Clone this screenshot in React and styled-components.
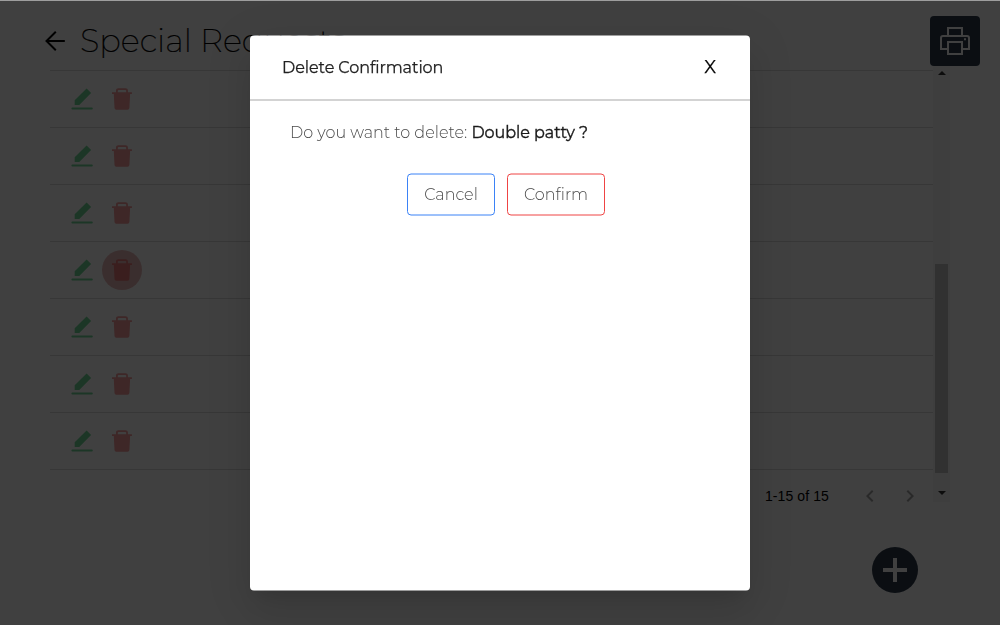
import React from "react";
import styled, { createGlobalStyle } from "styled-components";

const Global = createGlobalStyle`
  * { box-sizing: border-box; }
  body { margin: 0; background: #fff; overflow: hidden; }
`;

const Page = styled.div`
  position: relative;
  width: 1000px;
  height: 625px;
  overflow: hidden;
  background: #fff;
  font-family: Montserrat, Inter, sans-serif;
`;

const Header = styled.header`
  display: flex;
  align-items: flex-start;
  justify-content: space-between;
  height: 66px;
  padding: 16px 20px 0 43px;
`;

const TitleGroup = styled.div`
  display: flex;
  align-items: center;
  gap: 13px;
  height: 50px;
`;

const Title = styled.h1`
  margin: 0;
  font-size: 32px;
  font-weight: 200;
  line-height: 50px;
  white-space: nowrap;
  color: #000;
  -webkit-text-stroke: 0.2px #000;
`;

const PrintButton = styled.button`
  display: flex;
  align-items: center;
  justify-content: center;
  width: 50px;
  height: 50px;
  padding: 0;
  border: 0;
  border-radius: 4px;
  background: #2c3a4a;
`;

const TableArea = styled.main`
  display: flex;
  width: 900px;
  height: 436px;
  margin-left: 50px;
`;

const Table = styled.div`
  flex: 1;
  padding-top: 4px;
`;

const Row = styled.div`
  display: flex;
  align-items: center;
  height: 57px;
  padding-left: 12px;
  border-top: 1px solid #dadada;
`;

const IconButton = styled.button`
  display: flex;
  align-items: center;
  justify-content: center;
  width: 40px;
  height: 40px;
  padding: 0;
  border: 0;
  border-radius: 50%;
  color: ${(p) => p.$color};
  background: ${(p) => p.$fill || "transparent"};
`;

const Pagination = styled.div`
  display: flex;
  align-items: center;
  justify-content: flex-end;
  height: 53px;
  padding-right: 3px;
  border-top: 1px solid #dadada;
  color: #000;
  font: 14px "Liberation Sans", Arial, sans-serif;
`;

const PageCount = styled.span`
  margin-right: 21px;
  letter-spacing: 0.1px;
`;

const PageButton = styled.button`
  display: flex;
  align-items: center;
  justify-content: center;
  width: 40px;
  height: 40px;
  padding: 0;
  border: 0;
  background: transparent;
  color: #a2a2a2;
`;

const Scrollbar = styled.div`
  display: flex;
  flex-direction: column;
  align-items: flex-start;
  width: 17px;
  padding-left: 2px;
  background: #f5f5f5;
`;

const Arrow = styled.div`
  width: 0;
  height: 0;
  margin: ${(p) => (p.$up ? "5px 0 189px 2.5px" : "18px 0 0 2.5px")};
  border: 4px solid transparent;
  border-top: ${(p) => (p.$up ? "0" : "4px solid #303030")};
  border-bottom: ${(p) => (p.$up ? "4px solid #303030" : "0")};
`;

const Thumb = styled.div`
  width: 13px;
  height: 209px;
  background: #c1c1c1;
`;

const AddButton = styled.button`
  display: flex;
  align-items: center;
  justify-content: center;
  width: 46px;
  height: 46px;
  margin: 45px 0 0 872px;
  padding: 0;
  border: 0;
  border-radius: 50%;
  background: #2c3a4a;
`;

const Backdrop = styled.div`
  position: absolute;
  inset: 0;
  display: flex;
  justify-content: center;
  align-items: flex-start;
  padding-top: 35px;
  border-top: 1px solid #9e9e9e;
  background: rgba(0, 0, 0, 0.75);
  background-clip: padding-box;
`;

const Dialog = styled.section`
  width: 500px;
  height: 555px;
  border-radius: 4px;
  background: #fff;
  transform: translateY(-0.5px);
  will-change: transform;
  box-shadow: 0 11px 15px -7px rgba(0, 0, 0, 0.1), 0 24px 38px 3px rgba(0, 0, 0, 0.07),
    0 9px 46px 8px rgba(0, 0, 0, 0.06);
`;

const DialogHeader = styled.div`
  display: flex;
  align-items: center;
  justify-content: space-between;
  height: 65px;
  padding: 0 34px 0 32px;
  border-bottom: 1px solid #a8a8a8;
`;

const DialogTitle = styled.h2`
  margin: 0;
  padding-bottom: 2px;
  font-size: 16px;
  font-weight: 400;
  letter-spacing: -0.08px;
  -webkit-text-stroke: 0.25px #222;
  color: #222;
`;

const Close = styled.button`
  padding: 0 0 2px;
  border: 0;
  background: transparent;
  color: #000;
  font: 400 18px Montserrat, Inter, sans-serif;
  -webkit-text-stroke: 0.25px #000;
`;

const Question = styled.p`
  margin: 0;
  padding: 20px 0 0 40px;
  font-size: 16px;
  font-weight: 300;
  line-height: 24px;
  color: #4a4a4a;
`;

const Item = styled.strong`
  font-weight: 400;
  letter-spacing: -0.05px;
  -webkit-text-stroke: 0.35px #1a1a1a;
  color: #1a1a1a;
`;

const Actions = styled.div`
  display: flex;
  gap: 12px;
  padding: 29px 0 0 157px;
`;

const ActionButton = styled.button`
  width: ${(p) => p.$width};
  height: 42px;
  padding: 0 0 2px;
  border: 1px solid ${(p) => p.$color};
  border-radius: 4px;
  background: #fff;
  color: #4a4a4a;
  font: 300 16px Montserrat, Inter, sans-serif;
`;

const rows = [0, 1, 2, 3, 4, 5, 6];

const EditIcon = () => (
  <svg width="24" height="24" viewBox="0 0 24 24" fill="currentColor">
    <path d="M4.7 17.9v-4.7L16.6 1.5l4.5 4.4L9.3 17.9z" />
    <rect x="1.4" y="20.6" width="21.4" height="2" rx="1" />
  </svg>
);

const TrashIcon = () => (
  <svg width="24" height="24" viewBox="0 0 24 24" fill="currentColor">
    <path
      fillRule="evenodd"
      d="M2 5.2h4V3.4C6 2 7 1.2 8.3 1.2h7.2c1.4 0 2.4.8 2.4 2.2v1.8h4V7h-1.8l-.7 13.8c-.1 1.2-.8 1.9-2 1.9H6.5c-1.2 0-1.9-.7-2-1.9L3.8 7H2zm5.8 0h8.4V3.6c0-.5-.3-.7-.8-.7H8.6c-.5 0-.8.2-.8.7z"
    />
  </svg>
);

export default function App() {
  return (
    <Page>
      <Global />
      <Header>
        <TitleGroup>
          <svg width="24" height="24" viewBox="0 0 24 24" fill="none" stroke="#000" strokeWidth="2">
            <path d="M21.8 12H3.5M12.8 2.8 3.5 12l9.3 9.2" />
          </svg>
          <Title>Special Requests</Title>
        </TitleGroup>
        <PrintButton aria-label="Print">
          <svg width="32" height="32" viewBox="0 0 32 32" fill="none" stroke="#fff" strokeWidth="2">
            <path d="M9 10V3h14v8M9 24H2V13q0-2 2-2h24q2 0 2 2v11h-7M9 17h14v12H9z" />
            <path d="M25 14.3h2" />
          </svg>
        </PrintButton>
      </Header>
      <TableArea>
        <Table>
          {rows.map((row) => (
            <Row key={row}>
              <IconButton aria-label="Edit" $color="#6fd897">
                <EditIcon />
              </IconButton>
              <IconButton
                aria-label="Delete"
                $color={row === 3 ? "#e87878" : "#f59a9a"}
                $fill={row === 3 ? "#e8b8b8" : undefined}
              >
                <TrashIcon />
              </IconButton>
            </Row>
          ))}
          <Pagination>
            <PageCount>1-15 of 15</PageCount>
            <PageButton aria-label="Previous">
              <svg width="24" height="24" viewBox="0 0 24 24" fill="currentColor">
                <path d="M15.41 7.41 14 6l-6 6 6 6 1.41-1.41L10.83 12z" />
              </svg>
            </PageButton>
            <PageButton aria-label="Next">
              <svg width="24" height="24" viewBox="0 0 24 24" fill="currentColor">
                <path d="M10 6 8.59 7.41 13.17 12l-4.58 4.59L10 18l6-6z" />
              </svg>
            </PageButton>
          </Pagination>
        </Table>
        <Scrollbar>
          <Arrow $up />
          <Thumb />
          <Arrow />
        </Scrollbar>
      </TableArea>
      <AddButton aria-label="Add">
        <svg width="24" height="24" viewBox="0 0 24 24" stroke="#fff" strokeWidth="4">
          <path d="M12 0v24M0 12h24" />
        </svg>
      </AddButton>
      <Backdrop>
        <Dialog>
          <DialogHeader>
            <DialogTitle>Delete Confirmation</DialogTitle>
            <Close aria-label="Close">X</Close>
          </DialogHeader>
          <Question>
            Do you want to delete: <Item>Double patty ?</Item>
          </Question>
          <Actions>
            <ActionButton $width="88px" $color="#3b82f6">Cancel</ActionButton>
            <ActionButton $width="98px" $color="#ef4444">Confirm</ActionButton>
          </Actions>
        </Dialog>
      </Backdrop>
    </Page>
  );
}
